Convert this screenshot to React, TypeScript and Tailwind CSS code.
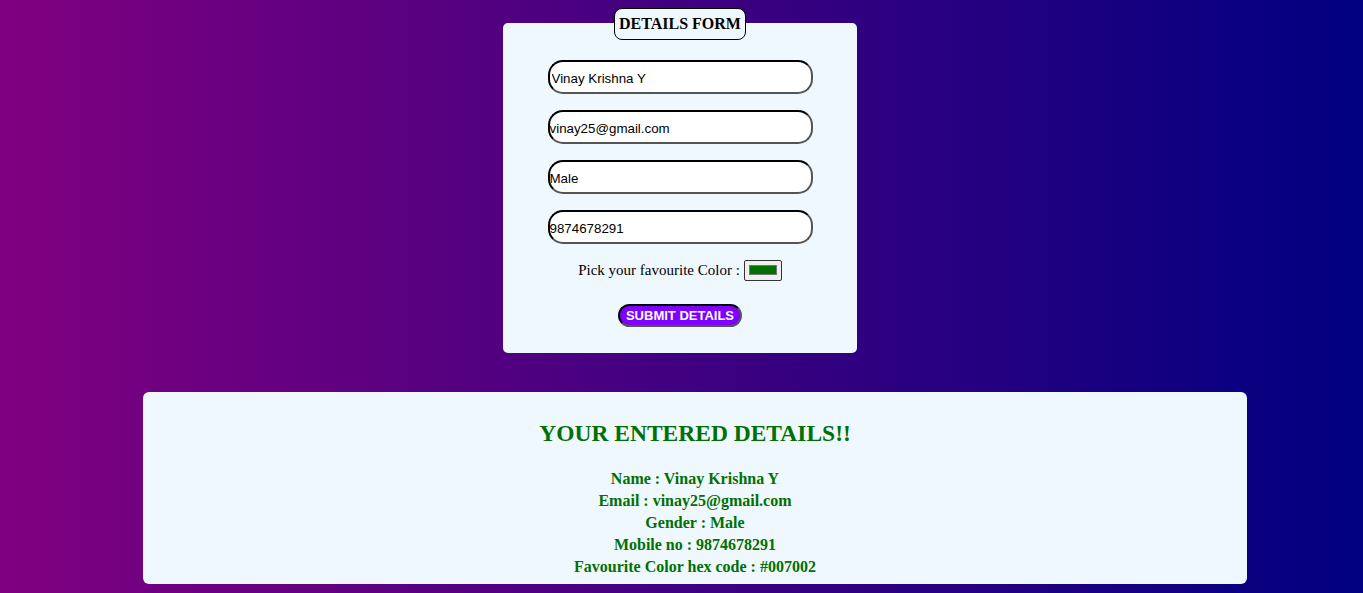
import { FC } from "react";

const fields = ["Vinay Krishna Y", "vinay25@gmail.com", "Male", "9874678291"];

const details = [
	["Name", "Vinay Krishna Y"],
	["Email", "vinay25@gmail.com"],
	["Gender", "Male"],
	["Mobile no", "9874678291"],
	["Favourite Color hex code", "#007002"],
];

const App: FC = () => {
	return (
		<div className="w-full h-[593px] overflow-hidden bg-[linear-gradient(to_right,#800080,#000080)] font-['Liberation_Serif',serif] pt-[23px]">
			{/* Form card */}
			<div className="relative ml-[503px] w-[354px] h-[330px] bg-[#f0f8ff] rounded-[5px] flex flex-col items-center pt-[37px]">
				<div className="absolute top-[-15px] left-[111px] w-[132px] h-[32px] border border-black rounded-[8px] bg-[#f0f8ff] flex items-center justify-center font-bold text-[16px] text-black">
					DETAILS FORM
				</div>

				<div className="flex flex-col gap-[16px]">
					{fields.map((v, i) => (
						<input
							key={i}
							readOnly
							value={v}
							className={`w-[265px] h-[34px] pt-[2px] bg-white rounded-[15px] border-2 border-t-black border-l-black border-r-[#555] border-b-[#555] ${i === 0 ? "pl-[2px]" : "pl-0"} font-['Liberation_Sans',sans-serif] text-[13.33px] text-black outline-none`}
						/>
					))}
				</div>

				<div className="mt-[15px] flex items-center gap-[4px] text-[15px] text-black">
					<span>Pick your favourite Color :</span>
					<div className="w-[38px] h-[21px] bg-[#efefef] border border-[#333] rounded-[2px] flex items-center justify-center">
						<div className="w-[28px] h-[10px] bg-[#007002] border border-[#777]" />
					</div>
				</div>

				<button className="mt-[22px] w-[124px] h-[23px] rounded-full bg-[#8000ff] border-2 border-t-black border-l-black border-r-[#555] border-b-[#555] text-white font-bold font-['Liberation_Sans',sans-serif] text-[13px] leading-none flex items-center justify-center">
					SUBMIT DETAILS
				</button>
			</div>

			{/* Output card */}
			<div className="mt-[39px] ml-[143px] w-[1104px] h-[192px] bg-[#f0f8ff] rounded-[6px] flex flex-col items-center pt-[27px] text-[#007002]">
				<h2 className="font-bold text-[23.5px] leading-[28px]">YOUR ENTERED DETAILS!!</h2>
				<div className="mt-[21px] flex flex-col items-center font-bold text-[16px] leading-[22px]">
					{details.map(([k, v]) => (
						<div key={k}>
							{k} : {v}
						</div>
					))}
				</div>
			</div>
		</div>
	);
};

export default App;
